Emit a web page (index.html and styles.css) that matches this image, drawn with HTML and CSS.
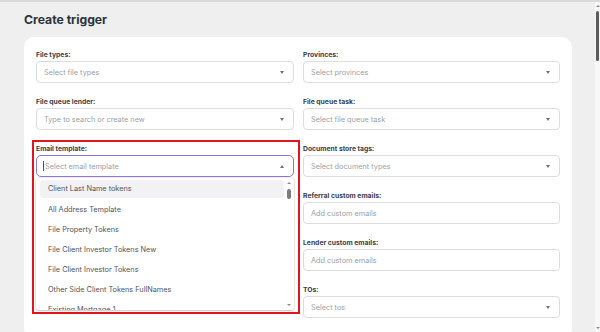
FILE: index.html
```html
<!DOCTYPE html>
<html>
<head>
    <title>Create trigger</title>
    <link rel="stylesheet" href="styles.css">
</head>
<body>
    <div class="page">
        <h1 class="title">Create trigger</h1>
        <div class="card">
            <div class="form-grid">
                <div class="field">
                    <label>File types:</label>
                    <div class="select"><span class="ph">Select file types</span><span class="caret"></span></div>
                </div>
                <div class="field">
                    <label>Provinces:</label>
                    <div class="select"><span class="ph">Select provinces</span><span class="caret"></span></div>
                </div>
                <div class="field">
                    <label>File queue lender:</label>
                    <div class="select"><span class="ph">Type to search or create new</span><span class="caret"></span></div>
                </div>
                <div class="field">
                    <label>File queue task:</label>
                    <div class="select"><span class="ph">Select file queue task</span><span class="caret"></span></div>
                </div>
                <div class="field field-open">
                    <label>Email template:</label>
                    <div class="select focused"><span class="cursor"></span><span class="ph">Select email template</span><span class="caret up"></span></div>
                    <div class="menu">
                        <div class="menu-list">
                            <div class="option active">Client Last Name tokens</div>
                            <div class="option">All Address Template</div>
                            <div class="option">File Property Tokens</div>
                            <div class="option">File Client Investor Tokens New</div>
                            <div class="option">File Client Investor Tokens</div>
                            <div class="option">Other Side Client Tokens FullNames</div>
                            <div class="option">Existing Mortgage 1</div>
                        </div>
                        <div class="menu-scroll">
                            <span class="arr arr-up"></span>
                            <span class="thumb"></span>
                            <span class="arr arr-down"></span>
                        </div>
                    </div>
                    <div class="highlight"></div>
                </div>
                <div class="field">
                    <label>Document store tags:</label>
                    <div class="select"><span class="ph">Select document types</span><span class="caret"></span></div>
                </div>
                <div class="field"></div>
                <div class="field">
                    <label>Referral custom emails:</label>
                    <div class="select"><span class="ph">Add custom emails</span></div>
                </div>
                <div class="field"></div>
                <div class="field">
                    <label>Lender custom emails:</label>
                    <div class="select"><span class="ph">Add custom emails</span></div>
                </div>
                <div class="field"></div>
                <div class="field">
                    <label>TOs:</label>
                    <div class="select"><span class="ph">Select tos</span><span class="caret"></span></div>
                </div>
            </div>
        </div>
    </div>
    <div class="win-scroll">
        <span class="arr arr-up"></span>
        <span class="win-thumb"></span>
        <span class="arr arr-down"></span>
    </div>
</body>
</html>
```

FILE: styles.css
```css
* {
    margin: 0;
    padding: 0;
    box-sizing: border-box;
}

html, body {
    height: 100%;
    overflow: hidden;
}

body {
    background-color: #efefef;
    border-top: 2px solid #dadada;
    font-family: "Inter", "Liberation Sans", sans-serif;
    color: #2f3640;
}

.page {
    padding: 9px 28px 0 24px;
}

.title {
    font-size: 12.2px;
    font-weight: 700;
    color: #2b3440;
    line-height: 18px;
    margin-bottom: 8px;
}

.card {
    width: 548px;
    background-color: #fff;
    border-radius: 10px;
    padding: 13px 12px 20px 12px;
}

.form-grid {
    display: grid;
    grid-template-columns: 258px 257px;
    column-gap: 9px;
    row-gap: 14px;
}

.field {
    position: relative;
}

.field label {
    display: block;
    font-size: 6.8px;
    font-weight: 700;
    line-height: 10px;
    margin-bottom: 1px;
    color: #3a4049;
}

.select {
    position: relative;
    height: 22px;
    border: 1px solid #dcdde0;
    border-radius: 4px;
    display: flex;
    align-items: center;
    padding-left: 7px;
}

.ph {
    font-size: 7.3px;
    color: #9ca1a8;
}

.caret {
    position: absolute;
    right: 9px;
    top: 9px;
    width: 0;
    height: 0;
    border-left: 2.5px solid transparent;
    border-right: 2.5px solid transparent;
    border-top: 3px solid #6d7178;
}

.caret.up {
    border-top: 0;
    border-bottom: 3px solid #6d7178;
}

.select.focused {
    border-color: #8b74e0;
    border-radius: 5px;
    padding-left: 6px;
}

.cursor {
    width: 1px;
    height: 10px;
    background-color: #555;
    margin-right: 1px;
}

.menu {
    position: absolute;
    left: 0;
    top: 34px;
    width: 258px;
    height: 132px;
    background-color: #fff;
    border-radius: 3px;
    box-shadow: 0 1px 2px rgba(0,0,0,0.18), 0 0 0 1px rgba(0,0,0,0.05);
    overflow: hidden;
    z-index: 3;
}

.menu-list {
    padding: 3px 0 0 4px;
    width: 248px;
}

.option {
    height: 20px;
    line-height: 20px;
    font-size: 7.3px;
    color: #52565c;
    padding-left: 8px;
    border-radius: 4px;
}

.option.active {
    background-color: #f2f2f4;
    height: 18px;
    line-height: 18px;
    margin-bottom: 2px;
    margin-top: -1px;
}

.menu-scroll {
    position: absolute;
    right: 1px;
    top: 4px;
    bottom: 4px;
    width: 8px;
}

.arr {
    position: absolute;
    left: 2px;
    width: 0;
    height: 0;
    border-left: 2px solid transparent;
    border-right: 2px solid transparent;
}

.arr-up {
    top: 0;
    border-bottom: 2.5px solid #8a8a8a;
}

.arr-down {
    bottom: 0;
    border-top: 2.5px solid #8a8a8a;
}

.thumb {
    position: absolute;
    left: 2px;
    top: 7px;
    width: 4px;
    height: 10px;
    border-radius: 2px;
    background-color: #7d7d7d;
}

.highlight {
    position: absolute;
    left: -4px;
    top: -4px;
    width: 268px;
    height: 174px;
    border: 2.5px solid #e3141d;
    z-index: 4;
    pointer-events: none;
}

.win-scroll {
    position: fixed;
    right: 0;
    top: 2px;
    bottom: 0;
    width: 5px;
    background-color: #f7f7f7;
}

.win-scroll .arr {
    left: 1px;
}

.win-scroll .arr-up {
    top: 3px;
}

.win-scroll .arr-down {
    bottom: 3px;
}

.win-thumb {
    position: absolute;
    left: 1px;
    top: 9px;
    width: 3px;
    height: 50px;
    border-radius: 2px;
    background-color: #5c5c5c;
}
```
